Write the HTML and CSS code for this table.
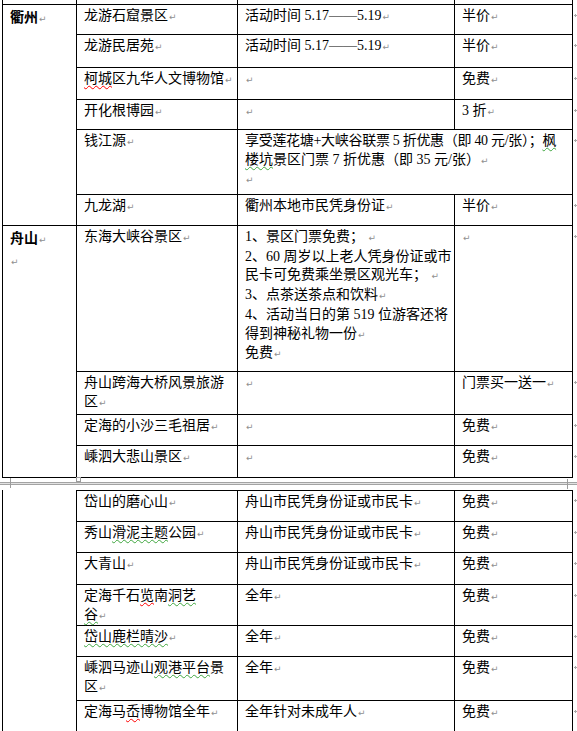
FILE: index.html
```html
<!DOCTYPE html>
<html lang="zh-CN">
<head>
<meta charset="utf-8">
<title>景区优惠</title>
<link rel="stylesheet" href="styles.css">
</head>
<body>
<div class="doc">
  <table class="tbl">
    <tr class="h5">
      <td class="c1 nb"></td><td class="c2 nb"></td><td class="c3 nb"></td><td class="c4 nb"></td><td class="e c5"></td>
    </tr>
    <tr class="h30">
      <td class="city" rowspan="6">衢州<span class="pm">↵</span></td>
      <td>龙游石窟景区<span class="pm">↵</span></td>
      <td>活动时间 5.17——5.19<span class="pm">↵</span></td>
      <td>半价<span class="pm">↵</span></td>
      <td class="e"><span class="rm"></span></td>
    </tr>
    <tr class="h33">
      <td>龙游民居苑<span class="pm">↵</span></td>
      <td>活动时间 5.17——5.19<span class="pm">↵</span></td>
      <td>半价<span class="pm">↵</span></td>
      <td class="e"><span class="rm"></span></td>
    </tr>
    <tr class="h32">
      <td><span class="sr">柯城</span>区九华人文博物馆<span class="pm">↵</span></td>
      <td><span class="pm">↵</span></td>
      <td>免费<span class="pm">↵</span></td>
      <td class="e"><span class="rm"></span></td>
    </tr>
    <tr class="h30">
      <td>开化根博园<span class="pm">↵</span></td>
      <td><span class="pm">↵</span></td>
      <td>3 折<span class="pm">↵</span></td>
      <td class="e"><span class="rm"></span></td>
    </tr>
    <tr class="h65">
      <td>钱江源<span class="pm">↵</span></td>
      <td colspan="2"><span class="tight">享受莲花塘+大峡谷联票 5 折优惠（即 40 元/张）；<span class="sg">枫</span></span><br><span class="sg">楼坑</span>景区门票 7 折优惠（即 35 元/张）<span class="pm">↵</span><br><span class="pm">↵</span></td>
      <td class="e"><span class="rm"></span></td>
    </tr>
    <tr class="h31">
      <td>九龙湖<span class="pm">↵</span></td>
      <td>衢州本地市民凭身份证<span class="pm">↵</span></td>
      <td>半价<span class="pm">↵</span></td>
      <td class="e"><span class="rm"></span></td>
    </tr>
    <tr class="h146">
      <td class="city" rowspan="4">舟山<span class="pm">↵</span><br><span class="pm">↵</span></td>
      <td>东海大峡谷景区<span class="pm">↵</span></td>
      <td>1、景区门票免费； <span class="pm">↵</span><br>2、60 周岁以上老人凭身份证或市<br>民卡可免费乘坐景区观光车； <span class="pm">↵</span><br>3、点茶送茶点和饮料<span class="pm">↵</span><br>4、活动当日的第 519 位游客还将<br>得到神秘礼物一份<span class="pm">↵</span><br>免费<span class="pm">↵</span></td>
      <td><span class="pm">↵</span></td>
      <td class="e"><span class="rm"></span></td>
    </tr>
    <tr class="h43">
      <td>舟山跨海大桥风景旅游<br>区<span class="pm">↵</span></td>
      <td><span class="pm">↵</span></td>
      <td>门票买一送一<span class="pm">↵</span></td>
      <td class="e"><span class="rm"></span></td>
    </tr>
    <tr class="h31">
      <td>定海的小沙三毛祖居<span class="pm">↵</span></td>
      <td><span class="pm">↵</span></td>
      <td>免费<span class="pm">↵</span></td>
      <td class="e"><span class="rm"></span></td>
    </tr>
    <tr class="h32">
      <td>嵊泗大悲山景区<span class="pm">↵</span></td>
      <td><span class="pm">↵</span></td>
      <td>免费<span class="pm">↵</span></td>
      <td class="e"><span class="rm"></span></td>
    </tr>
  </table>

  <div class="pagebreak">
    <div class="pb-line"></div>
    <span class="mk mk-l"></span>
    <span class="mk mk-c"></span>
    <span class="mk mk-r"></span>
  </div>

  <table class="tbl">
    <tr class="h32">
      <td class="c1" rowspan="7"></td>
      <td class="c2 top">岱山的磨心山<span class="pm">↵</span></td>
      <td class="c3 top">舟山市民凭身份证或市民卡<span class="pm">↵</span></td>
      <td class="c4 top">免费<span class="pm">↵</span></td>
      <td class="e c5"><span class="rm"></span></td>
    </tr>
    <tr class="h31">
      <td>秀山<span class="sg">滑泥主题</span>公园<span class="pm">↵</span></td>
      <td>舟山市民凭身份证或市民卡<span class="pm">↵</span></td>
      <td>免费<span class="pm">↵</span></td>
      <td class="e"><span class="rm"></span></td>
    </tr>
    <tr class="h32">
      <td>大青山<span class="pm">↵</span></td>
      <td>舟山市民凭身份证或市民卡<span class="pm">↵</span></td>
      <td>免费<span class="pm">↵</span></td>
      <td class="e"><span class="rm"></span></td>
    </tr>
    <tr class="h41">
      <td>定海千石<span class="sr">览</span>南<span class="sg">洞艺</span><br><span class="sg">谷</span><span class="pm">↵</span></td>
      <td>全年<span class="pm">↵</span></td>
      <td>免费<span class="pm">↵</span></td>
      <td class="e"><span class="rm"></span></td>
    </tr>
    <tr class="h31">
      <td><span class="sg">岱山鹿栏晴沙</span><span class="pm">↵</span></td>
      <td>全年<span class="pm">↵</span></td>
      <td>免费<span class="pm">↵</span></td>
      <td class="e"><span class="rm"></span></td>
    </tr>
    <tr class="h44">
      <td>嵊泗马迹山<span class="sg">观港平台</span>景<br>区<span class="pm">↵</span></td>
      <td>全年<span class="pm">↵</span></td>
      <td>免费<span class="pm">↵</span></td>
      <td class="e"><span class="rm"></span></td>
    </tr>
    <tr class="h40">
      <td>定海马<span class="sr">岙</span>博物馆全年<span class="pm">↵</span></td>
      <td>全年针对未成年人<span class="pm">↵</span></td>
      <td>免费<span class="pm">↵</span></td>
      <td class="e"><span class="rm"></span></td>
    </tr>
  </table>
</div>
</body>
</html>
```
FILE: styles.css
```css
* { box-sizing: border-box; }

html, body {
  margin: 0;
  padding: 0;
  background: #fff;
}

body {
  width: 577px;
  overflow: hidden;
  font-family: "Liberation Serif", "Noto Sans CJK SC", serif;
  font-size: 14px;
  line-height: 18.7px;
  color: #000;
}

.doc {
  padding-left: 2px;
}

.tbl {
  border-collapse: separate;
  border-spacing: 0;
  table-layout: fixed;
  width: 575px;
  border-left: 1px solid #000;
}

.tbl td {
  padding: 2px 6px 0 7px;
  vertical-align: top;
  white-space: nowrap;
  border-right: 1px solid #000;
  border-bottom: 1px solid #000;
}

.tbl td.c1 { width: 74px; }
.tbl td.c2 { width: 161px; }
.tbl td.c3 { width: 217px; }
.tbl td.c4 { width: 118px; }
.tbl td.c5 { width: 5px; }

.tbl td.nb { padding: 0; }

.tbl td.top { border-top: 1px solid #000; }

.tbl td.e {
  border: none;
  padding: 0 0 0 1px;
  line-height: 0;
  font-size: 0;
}

.rm {
  display: block;
  margin-top: 9px;
  width: 3px;
  height: 3px;
  background:
    linear-gradient(#a8a8a8, #a8a8a8) center / 3px 1px no-repeat,
    linear-gradient(#a8a8a8, #a8a8a8) center / 1px 3px no-repeat;
}

.tbl td.city {
  font-family: "Noto Sans CJK SC", sans-serif;
  font-weight: bold;
}

.h5 { height: 5px; }
.h30 { height: 30px; }
.h31 { height: 31px; }
.h32 { height: 32px; }
.h33 { height: 33px; }
.h40 { height: 40px; }
.h41 { height: 41px; }
.h43 { height: 43px; }
.h44 { height: 44px; }
.h65 { height: 65px; }
.h146 { height: 146px; }

.pm {
  font-family: "DejaVu Sans", sans-serif;
  font-weight: normal;
  font-size: 9px;
  color: #8f8f8f;
  margin-left: 1px;
}

.tight { letter-spacing: -0.3px; }

.sr, .sg {
  text-decoration-line: underline;
  text-decoration-style: wavy;
  text-decoration-thickness: 1px;
  text-underline-offset: 2px;
  text-decoration-skip-ink: none;
}
.sr { text-decoration-color: #ff0000; }
.sg { text-decoration-color: #3fa63f; }

.pagebreak {
  position: relative;
  height: 12px;
  padding-top: 4px;
  margin-left: -2px;
}

.pb-line {
  height: 3px;
  border-top: 1px solid #a3a3a3;
  border-bottom: 1px solid #a3a3a3;
  background: #e2e2e2;
}

.mk {
  position: absolute;
  display: block;
}
.mk-l {
  left: 10px;
  top: 0;
  width: 1px;
  height: 10px;
  background: #9c9c9c;
}
.mk-c {
  left: 76px;
  top: -1px;
  width: 5px;
  height: 5px;
  border: 1px solid #9c9c9c;
  background: #fff;
}
.mk-r {
  left: 567px;
  top: 1px;
  width: 1px;
  height: 10px;
  background: #9c9c9c;
}
```
